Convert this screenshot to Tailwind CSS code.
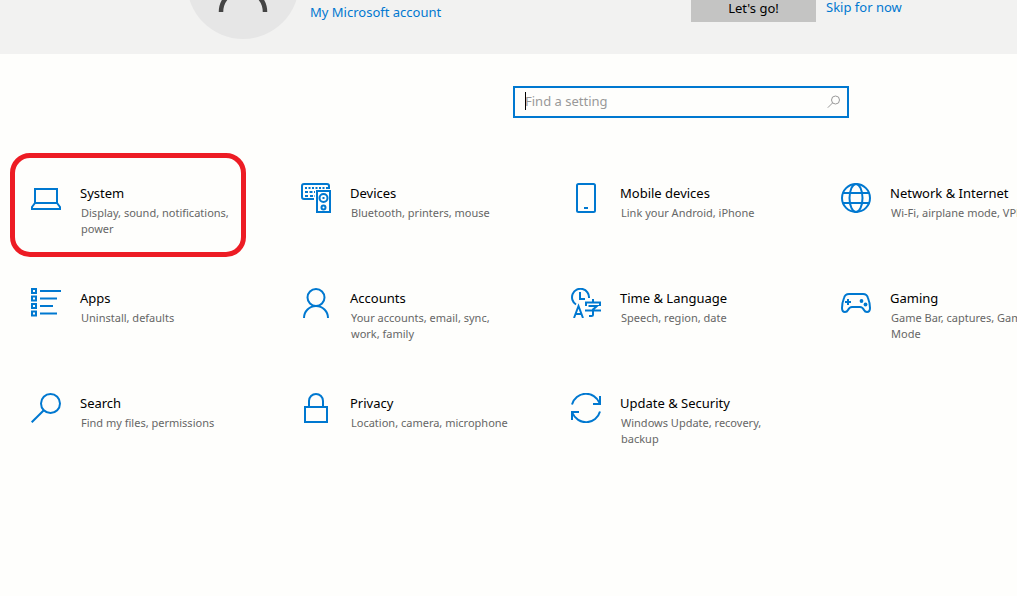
<!DOCTYPE html>
<html lang="en">
<head>
<meta charset="utf-8">
<title>Settings</title>
<script src="https://cdn.jsdelivr.net/npm/@tailwindcss/browser@4"></script>
</head>
<body class="min-h-screen overflow-hidden bg-[#fefefc] font-['Noto_Sans','Open_Sans',sans-serif] text-[13px] leading-5 text-black">
<header class="flex h-[54px] items-end overflow-hidden bg-[#f2f2f1] pl-[187px] whitespace-nowrap">
  <svg class="mr-[11px] mb-[15px] size-28 shrink-0" viewBox="0 0 112 112" fill="none" aria-hidden="true">
    <circle cx="56" cy="56" r="56" fill="#e6e6e6"/>
    <circle cx="56" cy="47" r="16" stroke="#444" stroke-width="4"/>
    <path d="M34 85a22 22 0 0 1 44 0" stroke="#444" stroke-width="4.5"/>
  </svg>
  <a href="#" class="mb-8 w-[381px] shrink-0 text-[#0078d0]">My Microsoft account</a>
  <button type="button" class="mb-8 h-8 w-[125px] shrink-0 bg-[#c4c4c3] pt-1">Let's go!</button>
  <a href="#" class="mb-[37px] ml-[10px] shrink-0 text-[#0078d0]">Skip for now</a>
</header>
<main>
  <form class="relative mt-8 ml-[513px] flex h-8 w-[336px] items-center border-2 border-[#0078d0] bg-[#fefefc]">
    <input type="text" aria-label="Find a setting" placeholder="Find a setting" class="h-full min-w-0 flex-1 bg-transparent pb-[2px] pl-[10px] outline-none placeholder:text-[#999]">
    <span class="absolute top-1 left-[10px] h-[18px] w-px bg-black"></span>
    <svg class="mr-[6px] size-[14px]" viewBox="0 0 14 14" fill="none" stroke="#999" aria-hidden="true"><circle cx="8.5" cy="5" r="4"/><path d="M5.6 7.9.8 12.7"/></svg>
  </form>
  <nav class="mt-[35px] ml-[10px] grid grid-cols-[repeat(4,236px)] gap-x-[34px] auto-rows-[105px]" aria-label="Settings categories">
    <a href="#" class="relative flex gap-[19px] pt-[30px] pl-[21px]">
      <span class="absolute inset-x-0 top-0 h-[104px] rounded-[20px] border-5 border-[#ed1c24]"></span>
      <svg class="size-[30px] shrink-0" viewBox="0 0 30 30" fill="none" stroke="#0078d0" stroke-width="2" aria-hidden="true"><path d="M4 20V6h22v14M4 20h22l3 4v2H1v-2z"/></svg>
      <span><span class="block">System</span><span class="mt-[2px] block pl-px text-[11px] leading-4 text-[#666]">Display, sound, notifications,<br>power</span></span>
    </a>
    <a href="#" class="flex gap-[19px] pt-[30px] pl-[21px]">
      <svg class="size-[30px] shrink-0" viewBox="0 0 30 30" fill="none" stroke="#0078d0" stroke-width="2" aria-hidden="true"><path d="M13 16H3a2 2 0 0 1-2-2V3a2 2 0 0 1 2-2h23a2 2 0 0 1 2 2v3M16 8h13v21H16z"/><path d="M4 5h23" stroke-dasharray="2 1.500"/><path d="M4 9h10M4 13h3M9 13h5" stroke-dasharray="3 1.500"/><circle cx="22.500" cy="15" r="4"/><circle cx="22.500" cy="24.500" r="2"/><path d="M21.500 15h2"/></svg>
      <span><span class="block">Devices</span><span class="mt-[2px] block pl-px text-[11px] leading-4 text-[#666]">Bluetooth, printers, mouse</span></span>
    </a>
    <a href="#" class="flex gap-[19px] pt-[30px] pl-[21px]">
      <svg class="size-[30px] shrink-0" viewBox="0 0 30 30" fill="none" stroke="#0078d0" stroke-width="2" aria-hidden="true"><rect x="6" y="1" width="18" height="28" rx="1.500"/><path d="M13 25h4"/></svg>
      <span><span class="block">Mobile devices</span><span class="mt-[2px] block pl-px text-[11px] leading-4 text-[#666]">Link your Android, iPhone</span></span>
    </a>
    <a href="#" class="flex gap-[19px] pt-[30px] pl-[21px]">
      <svg class="size-[30px] shrink-0" viewBox="0 0 30 30" fill="none" stroke="#0078d0" stroke-width="2" aria-hidden="true"><circle cx="15" cy="15" r="14"/><ellipse cx="15" cy="15" rx="6.500" ry="14"/><path d="M2 10h26M2 20h26"/></svg>
      <span class="whitespace-nowrap"><span class="block">Network &amp; Internet</span><span class="mt-[2px] block pl-px text-[11px] leading-4 text-[#666]">Wi-Fi, airplane mode, VPN</span></span>
    </a>
    <a href="#" class="flex gap-[19px] pt-[30px] pl-[21px]">
      <svg class="size-[30px] shrink-0" viewBox="0 0 30 30" fill="none" stroke="#0078d0" stroke-width="2" aria-hidden="true"><path d="M1 1h4v4H1zM1 8.500h4v4H1zM1 16h4v4H1zM1 23.500h4v4H1zM9 3h21M9 10.500h17M9 18h13M9 25.500h17"/></svg>
      <span><span class="block">Apps</span><span class="mt-[2px] block pl-px text-[11px] leading-4 text-[#666]">Uninstall, defaults</span></span>
    </a>
    <a href="#" class="flex gap-[19px] pt-[30px] pl-[21px]">
      <svg class="size-[30px] shrink-0" viewBox="0 0 30 30" fill="none" stroke="#0078d0" stroke-width="2" aria-hidden="true"><circle cx="15" cy="9.500" r="8.500"/><path d="M3 30a12 12 0 0 1 24 0"/></svg>
      <span><span class="block">Accounts</span><span class="mt-[2px] block pl-px text-[11px] leading-4 text-[#666]">Your accounts, email, sync,<br>work, family</span></span>
    </a>
    <a href="#" class="flex gap-[19px] pt-[30px] pl-[21px]">
      <svg class="size-[30px] shrink-0" viewBox="0 0 30 30" fill="none" stroke="#0078d0" stroke-width="2" aria-hidden="true"><path d="M5 16.500A8.500 8.500 0 1 1 18 10M9 4v7h5M3 30l4.500-12L12 30M4.500 26h6M22 11v3M15 18v-3.500h14V18M17.500 18H26l-4 3.500V27q0 1-1.500 1H18M14 22.500h16"/></svg>
      <span><span class="block">Time &amp; Language</span><span class="mt-[2px] block pl-px text-[11px] leading-4 text-[#666]">Speech, region, date</span></span>
    </a>
    <a href="#" class="flex gap-[19px] pt-[30px] pl-[21px]">
      <svg class="size-[30px] shrink-0" viewBox="0 0 30 30" fill="none" stroke="#0078d0" stroke-width="2" aria-hidden="true"><path d="M8 6h14q4 0 5 4 2 5 2 10 0 4-3 4-2 0-3-2-1.500-3-4-3h-8q-2.500 0-4 3-1 2-3 2-3 0-3-4 0-5 2-10 1-4 5-4zM7 11v6M4 14h6"/><g fill="#0078d0" stroke="none"><circle cx="20.500" cy="13" r="1.900"/><circle cx="24.500" cy="16.500" r="1.900"/></g></svg>
      <span class="whitespace-nowrap"><span class="block">Gaming</span><span class="mt-[2px] block pl-px text-[11px] leading-4 text-[#666]">Game Bar, captures, Game<br>Mode</span></span>
    </a>
    <a href="#" class="flex gap-[19px] pt-[30px] pl-[21px]">
      <svg class="size-[30px] shrink-0" viewBox="0 0 30 30" fill="none" stroke="#0078d0" stroke-width="2" aria-hidden="true"><circle cx="19.500" cy="10.500" r="9.500"/><path d="M12.800 17.200.7 29.300"/></svg>
      <span><span class="block">Search</span><span class="mt-[2px] block pl-px text-[11px] leading-4 text-[#666]">Find my files, permissions</span></span>
    </a>
    <a href="#" class="flex gap-[19px] pt-[30px] pl-[21px]">
      <svg class="size-[30px] shrink-0" viewBox="0 0 30 30" fill="none" stroke="#0078d0" stroke-width="2" aria-hidden="true"><path d="M4 14h22v15H4zM8 14V8a7 7 0 0 1 14 0v6"/></svg>
      <span><span class="block">Privacy</span><span class="mt-[2px] block pl-px text-[11px] leading-4 text-[#666]">Location, camera, microphone</span></span>
    </a>
    <a href="#" class="flex gap-[19px] pt-[30px] pl-[21px]">
      <svg class="size-[30px] shrink-0" viewBox="0 0 30 30" fill="none" stroke="#0078d0" stroke-width="2" aria-hidden="true"><path d="M1 11.500A14.500 14.500 0 0 1 28.500 10M29 3v8h-7M29 18.500A14.500 14.500 0 0 1 1.500 20M1 27v-8h7"/></svg>
      <span><span class="block">Update &amp; Security</span><span class="mt-[2px] block pl-px text-[11px] leading-4 text-[#666]">Windows Update, recovery,<br>backup</span></span>
    </a>
  </nav>
</main>
</body>
</html>
